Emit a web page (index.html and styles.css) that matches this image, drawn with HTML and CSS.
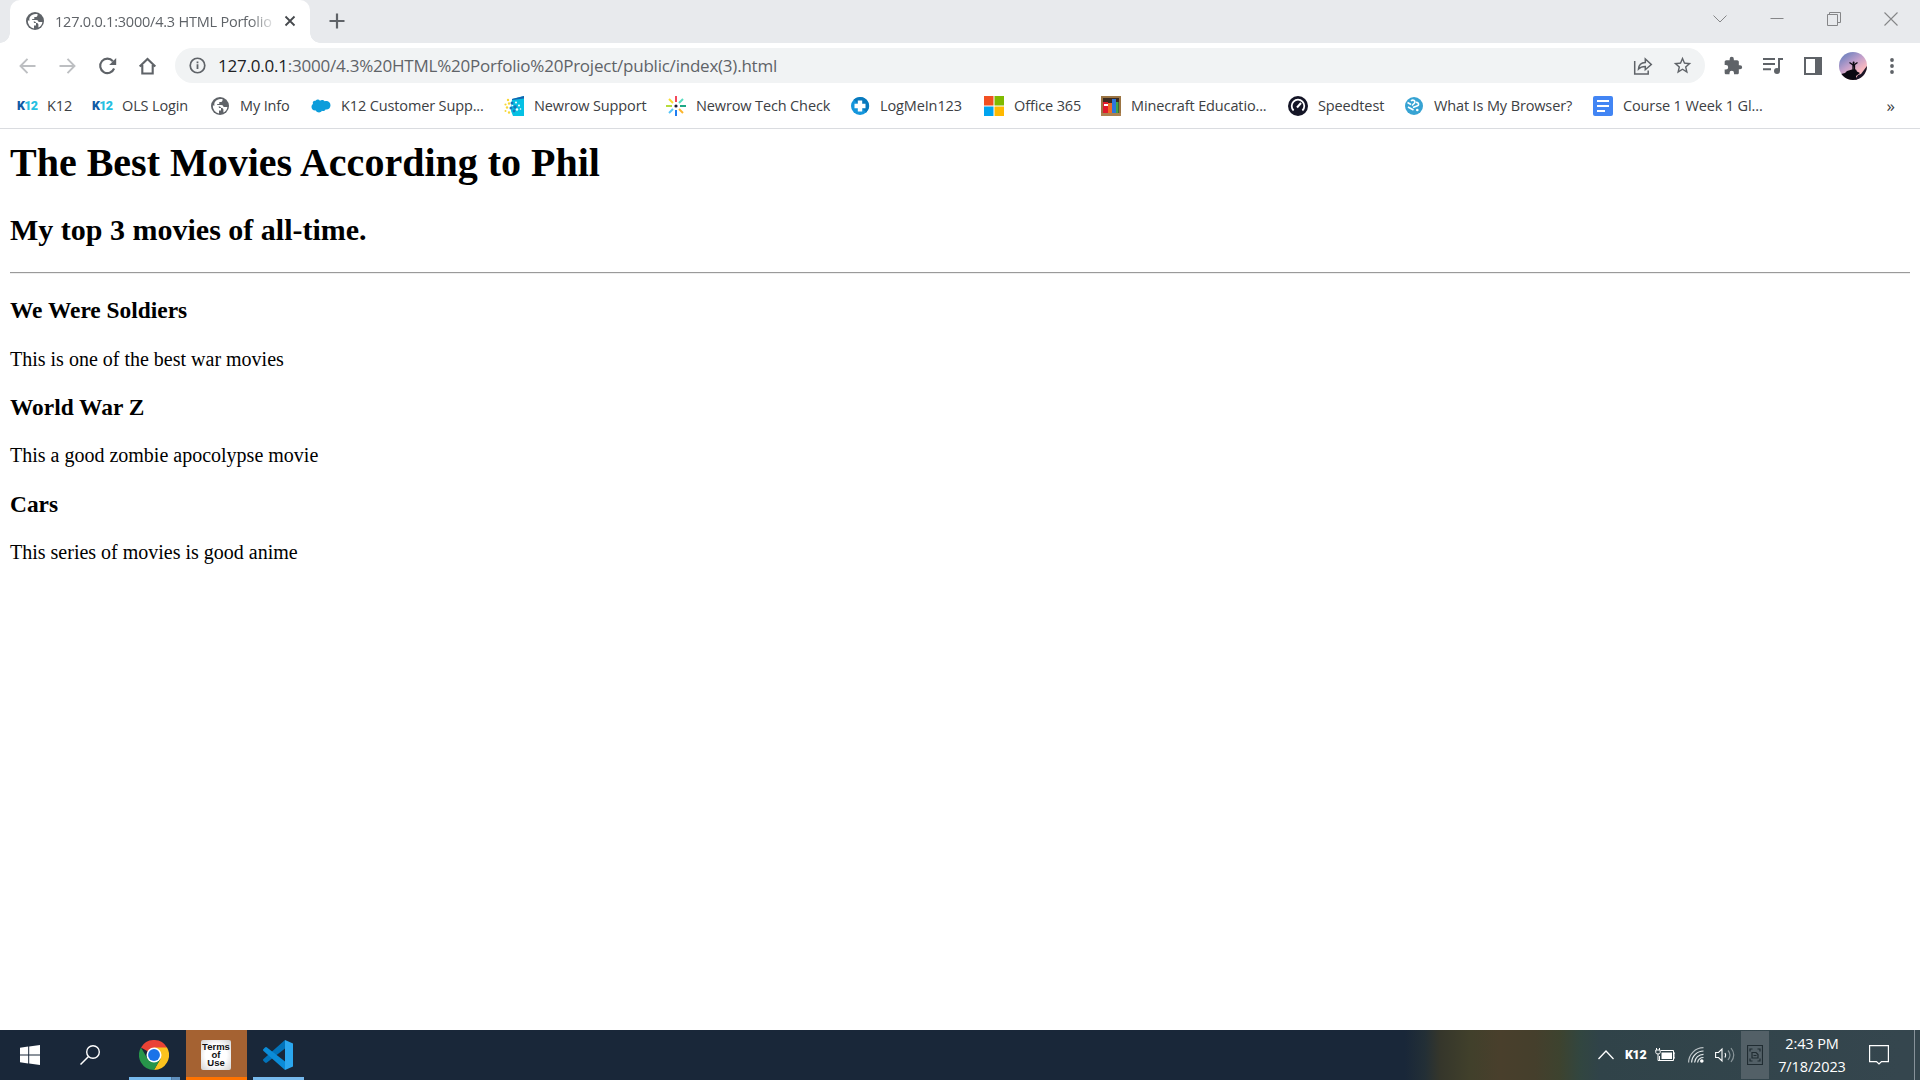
FILE: index.html
```html
<html lang="en">
<head>
<meta charset="utf-8">
<title>127.0.0.1:3000/4.3 HTML Porfolio Project</title>
<link rel="stylesheet" href="styles.css">
</head>
<body>
<svg width="0" height="0" class="defs">
  <symbol id="globe" viewBox="0 0 20 20"><circle cx="10" cy="10" r="9" fill="#5f6368"/><path d="M2.800 9.600H6.500c1.700 0 2.500 1 2.500 2.500H11v2.500H9v2.800A7.400 7.400 0 0 1 2.800 9.600zM7 4c1.600-1 3.800-1.300 5.500-.9v1.200c0 1.200-.8 1.800-1.900 1.800H9.300v2H7.200V9h4c1.500 0 2.300.9 2.300 2h3.900c-.3 2.700-2 4.700-4 5.600v-2.900c0-1.200-.9-1.700-2-1.700-.7-1-1-1.600-2.200-1.600H5.600C4.500 9.800 4.300 8.800 4.300 8c0-1.500 1.200-3.100 2.700-4z" fill="#fff"/></symbol>
</svg>
<div class="tabstrip">
  <div class="tab">
    <svg class="i20" viewBox="0 0 20 20"><use href="#globe"/></svg>
    <span class="tab-title">127.0.0.1:3000/4.3 HTML Porfolio</span>
    <svg class="tab-x" viewBox="0 0 12 12"><path d="M1.500 1.500l9 9M10.500 1.500l-9 9" stroke="#46494d" stroke-width="1.800"/></svg>
  </div>
  <svg class="plus" viewBox="0 0 16 16"><path d="M8 .5v15M.5 8h15" stroke="#5f6368" stroke-width="2.200"/></svg>
  <div class="winctl">
    <svg viewBox="0 0 14 14"><path d="M.5 3.500 7 10l6.500-6.500" fill="none" stroke="#858688"/></svg>
    <svg viewBox="0 0 14 14"><path d="M.5 6.500h13" stroke="#858688"/></svg>
    <svg viewBox="0 0 14 14"><path d="M.5 2.500h10v11H.5zM2.500 2.500v-2h11v10h-2.500" fill="none" stroke="#858688"/></svg>
    <svg viewBox="0 0 14 14"><path d="M.5.500l13 13M13.500.500l-13 13" stroke="#858688" stroke-width="1.100"/></svg>
  </div>
</div>
<div class="toolbar">
  <div class="nav">
    <svg viewBox="0 0 20 20"><path d="M18.500 10H3.500M10.500 2.800 3.500 10l7 7.200" fill="none" stroke="#bdbfc2" stroke-width="1.900"/></svg>
    <svg viewBox="0 0 20 20"><path d="M2.500 10H17.500M10.500 2.800 17.500 10l-7 7.200" fill="none" stroke="#bdbfc2" stroke-width="1.900"/></svg>
    <svg viewBox="0 0 20 20"><path d="M17.100 12.500A7.200 7.200 0 1 1 15.900 5.200" fill="none" stroke="#5f6368" stroke-width="2.100"/><path d="M19.200 2v7h-7z" fill="#5f6368"/></svg>
    <svg viewBox="0 0 20 20"><path d="M2.700 10.600 10.500 3l7.800 7.600M5.300 9v8.500h10.400V9" fill="none" stroke="#5f6368" stroke-width="2.100"/></svg>
  </div>
  <div class="omnibox">
    <svg class="info" viewBox="0 0 18 18"><circle cx="9" cy="9" r="7.700" fill="none" stroke="#5f6368" stroke-width="1.800"/><path d="M9 7.800v5M9 4.800v1.900" stroke="#5f6368" stroke-width="1.900"/></svg>
    <span class="url"><b>127.0.0.1</b>:3000/4.3%20HTML%20Porfolio%20Project/public/index(3).html</span>
    <svg class="share" viewBox="0 0 20 20"><path d="M1.700 5v13h13.500v-3.500" fill="none" stroke="#5f6368" stroke-width="1.500"/><path d="M5.500 13c.3-4.500 3-6.500 6.800-6.600V3l6 5.500-6 5.200v-3.300c-3 0-5 .6-6.800 2.600z" fill="none" stroke="#5f6368" stroke-width="1.500"/></svg>
    <svg class="star" viewBox="0 0 24 24"><path d="M22 9.240l-7.190-.62L12 2 9.190 8.630 2 9.240l5.460 4.730L5.820 21 12 17.270 18.180 21l-1.630-7.030L22 9.240zM12 15.400l-3.760 2.270 1-4.280-3.320-2.880 4.380-.38L12 6.100l1.710 4.040 4.380.38-3.320 2.880 1 4.280L12 15.400z" fill="#5f6368"/></svg>
  </div>
  <div class="actions">
    <svg viewBox="0 0 24 24"><path d="M20.500 11H19V7c0-1.100-.9-2-2-2h-4V3.500a2.500 2.500 0 0 0-5 0V5H4c-1.100 0-2 .9-2 2v3.800h1.500a2.700 2.700 0 0 1 0 5.400H2V20c0 1.100.9 2 2 2h3.800v-1.500a2.700 2.700 0 0 1 5.400 0V22H17c1.100 0 2-.9 2-2v-4h1.500a2.500 2.500 0 0 0 0-5z" fill="#5f6368"/></svg>
    <svg viewBox="0 0 20 20"><path d="M0 3h12M0 8h12M0 13.300h8M16 15V2.900h4" fill="none" stroke="#5f6368" stroke-width="2"/><circle cx="14" cy="15" r="3" fill="#5f6368"/></svg>
    <svg viewBox="0 0 20 20"><path d="M2 2h16v16H2z" fill="none" stroke="#5f6368" stroke-width="2"/><path d="M12 2h6v16h-6z" fill="#5f6368"/></svg>
    <svg class="avatar" viewBox="0 0 28 28"><defs><linearGradient id="sky" x2=".7" y2="1"><stop offset="0" stop-color="#5478bb"/><stop offset=".5" stop-color="#c3a0cb"/><stop offset=".8" stop-color="#f8b9c0"/></linearGradient><clipPath id="round"><circle cx="14" cy="14" r="14"/></clipPath></defs><g clip-path="url(#round)"><path d="M0 0h28v28H0z" fill="url(#sky)"/><path d="M0 22.500l6-1.500 2-2 5-1.500h4l1 2 3 1.500-4 3 1 4H0z" fill="#0b0910"/><path d="M16 28l3-5 3-1 6-8v14z" fill="#1b1626"/><path d="M10.500 10.500l3 2h2l3-2M14.500 11v3.500M14 13v5M15.500 13v5" stroke="#0b0910" stroke-width="1.300" fill="none"/><circle cx="14.600" cy="10.500" r="1" fill="#0b0910"/></g></svg>
    <svg class="dots" viewBox="0 0 20 20"><g fill="#5f6368"><circle cx="10" cy="4" r="1.900"/><circle cx="10" cy="10" r="1.900"/><circle cx="10" cy="16" r="1.900"/></g></svg>
  </div>
</div>
<div class="bookmarks">
  <div class="bm"><span class="k12"><b>K</b>12</span><span class="t">K12</span></div>
  <div class="bm"><span class="k12"><b>K</b>12</span><span class="t">OLS Login</span></div>
  <div class="bm"><svg class="i20" viewBox="0 0 20 20"><use href="#globe"/></svg><span class="t">My Info</span></div>
  <div class="bm"><svg class="i20" viewBox="0 0 20 20"><path d="M4.500 4.700C6 3 8 3.300 9 4.700c1-1 3.500-1.200 4.700.6 2.800-1.200 5.800.7 5.800 3.900 0 3-2.500 4.800-5 4.300-.8 1.500-2.400 1.800-3.600 1.200-1 2.300-5 2.300-6-.3C2.300 14.800.5 13 .5 11c0-1.200.5-2.300 1.500-3-.8-2 .5-3.700 2.500-3.300z" fill="#0d9ddb"/></svg><span class="t">K12 Customer Supp...</span></div>
  <div class="bm"><svg class="i20" viewBox="0 0 20 20"><path d="M8 3l12-3v20H9l-2-5z" fill="#06c1e4"/><path d="M8 3l12-3v2.500L8 4z" fill="#1561ae"/><g fill="#f7d735"><circle cx="4" cy="4" r="1.200"/><circle cx="1.500" cy="8.500" r="1.100"/><circle cx="5" cy="7.500" r="1.200"/><circle cx="3" cy="11.500" r="1.200"/><circle cx="1.500" cy="15" r="1"/><circle cx="5" cy="16.500" r="1.200"/></g><g fill="#1976bc"><circle cx="8" cy="7" r="1.500"/><circle cx="7" cy="12" r="1.500"/><circle cx="11" cy="11" r="1.800"/><circle cx="10" cy="15" r="1.400"/></g><g fill="#fff"><circle cx="12" cy="6.500" r="1"/><circle cx="15" cy="9.500" r="1"/><circle cx="13" cy="13.500" r="1.200"/><circle cx="8.500" cy="9.500" r=".8"/><circle cx="16.500" cy="13" r=".8"/></g></svg><span class="t">Newrow Support</span></div>
  <div class="bm"><svg class="i20" viewBox="0 0 20 20"><g stroke-width="2"><path d="M10 0v6" stroke="#f2485a"/><path d="M17 3l-4 4" stroke="#57dcc0"/><path d="M20 10h-6" stroke="#1da886"/><path d="M17 17l-4-4" stroke="#fcb52b"/><path d="M10 20v-6" stroke="#207df1"/><path d="M3 17l4-4" stroke="#55c5f8"/><path d="M0 10h6" stroke="#b6dc3c"/><path d="M3 3l4 4" stroke="#f9db30"/></g><circle cx="10" cy="10" r="1.600" fill="#1d1b33"/></svg><span class="t">Newrow Tech Check</span></div>
  <div class="bm"><svg class="i20" viewBox="0 0 20 20"><circle cx="10" cy="10" r="9" fill="#1596dc"/><path d="M10 1a9 9 0 0 1 6.400 15.400L3.600 3.600A9 9 0 0 1 10 1z" fill="#0879bd"/><path d="M7.800 4.500h4.400v3.300h3.300v4.400h-3.300v3.300H7.800v-3.300H4.500V7.800h3.300z" fill="#fff"/></svg><span class="t">LogMeIn123</span></div>
  <div class="bm"><svg class="i20" viewBox="0 0 20 20"><path d="M0 0h9.500v9.500H0z" fill="#f25022"/><path d="M10.500 0H20v9.500h-9.500z" fill="#7fba00"/><path d="M0 10.500h9.500V20H0z" fill="#00a4ef"/><path d="M10.500 10.500H20V20h-9.500z" fill="#ffb900"/></svg><span class="t">Office 365</span></div>
  <div class="bm"><svg class="i20" viewBox="0 0 20 20"><path d="M0 0h20v20H0z" fill="#9b7443"/><path d="M2 2h16v15H2z" fill="#3b2b20"/><path d="M2 6h5v11H2z" fill="#df1b2c"/><path d="M3 8h4v2H3z" fill="#fff"/><path d="M7 7h4v10H7z" fill="#f06a25"/><path d="M11 3h4v14h-4z" fill="#2d75dd"/><path d="M15 6h2.500v11H15z" fill="#3fa64a"/><path d="M0 17h20v3H0z" fill="#ad8250"/></svg><span class="t">Minecraft Educatio...</span></div>
  <div class="bm"><svg class="i20" viewBox="0 0 20 20"><circle cx="10" cy="10" r="10" fill="#141526"/><path d="M5.600 14.500a6.300 6.300 0 1 1 8.800 0" fill="none" stroke="#fff" stroke-width="1.800"/><path d="M9 11.500l4-4.500" stroke="#fff" stroke-width="2"/></svg><span class="t">Speedtest</span></div>
  <div class="bm"><svg class="i20" viewBox="0 0 20 20"><circle cx="10" cy="10" r="9" fill="#37a3d3"/><path d="M3.500 6.500 7 8.500M7 5c2-2 5 0 3.500 2L8 9.500M12 6.500c2.500-.5 3.500 2.500 1.500 3.200L9 11.500M4 11l5.500 3" fill="none" stroke="#fff" stroke-width="1.600"/><circle cx="13.300" cy="14" r="1.300" fill="#fff"/></svg><span class="t">What Is My Browser?</span></div>
  <div class="bm"><svg class="i20" viewBox="0 0 20 20"><rect width="20" height="20" rx="2" fill="#4285f4"/><path d="M4 5h12M4 10h12M4 15h8" stroke="#fff" stroke-width="2"/></svg><span class="t">Course 1 Week 1 Gl...</span></div>
  <span class="more">»</span>
</div>
<div class="page">
  <h1>The Best Movies According to Phil</h1>
  <h2>My top 3 movies of all-time.</h2>
  <hr>
  <h3>We Were Soldiers</h3>
  <p>This is one of the best war movies</p>
  <h3>World War Z</h3>
  <p>This a good zombie apocolypse movie</p>
  <h3>Cars</h3>
  <p>This series of movies is good anime</p>
</div>
<div class="taskbar">
  <div class="task start"><svg class="i20" viewBox="0 0 20 20"><path d="M0 2.800 8.200 1.600V9.500H0zM9.200 1.500 20 0v9.500H9.200zM0 10.500h8.200v8L0 17.300zM9.200 10.500H20V20L9.200 18.600z" fill="#fff"/></svg></div>
  <div class="task find"><svg class="i20" viewBox="0 0 20 20"><circle cx="13" cy="7" r="6.300" fill="none" stroke="#fff" stroke-width="1.400"/><path d="M8.500 11.500.5 19.500" stroke="#fff" stroke-width="1.500"/></svg></div>
  <div class="task chrome"><svg viewBox="0 0 48 48"><path d="M24 24 3.200 12A24 24 0 0 1 44.800 12z" fill="#ea4335"/><path d="M24 12h20.800A24 24 0 0 1 24 48l10.400-18z" fill="#fcc31e"/><path d="M3.200 12A24 24 0 0 0 24 48l10.400-18H13.600z" fill="#27954a"/><circle cx="24" cy="24" r="12" fill="#fff"/><circle cx="24" cy="24" r="9.500" fill="#1a73e8"/></svg></div>
  <div class="task terms"><span>Terms<br>of<br>Use</span></div>
  <div class="task code"><svg viewBox="0 0 30 30"><path d="M22 0 30 3.500v23L22 30z" fill="#2ba7ef"/><path d="M22 0v8.500L4 22.500q-1 .8-2 0L.5 21q-1-1 0-2z" fill="#0273ba"/><path d="M22 30v-8.500L4 7.500q-1-.8-2 0L.5 9q-1 1 0 2z" fill="#0b8cd8"/></svg></div>
  <div class="tray">
    <svg class="up" viewBox="0 0 16 20"><path d="M.5 14 8 6l7.500 8" fill="none" stroke="#fff" stroke-width="1.300"/></svg>
    <span class="trayk">K12</span>
    <svg class="i20" viewBox="0 0 20 20"><path d="M6 5.500h12.500v10H4.500V11M18.500 8H20v5h-1.500" fill="none" stroke="#fff"/><path d="M6.500 7.500h10.500v6.500H6.500z" fill="#fff"/><path d="M.8 5h4.400v2.500q0 1.500-2.200 1.500T.8 7.500zM1.500 3v2M4.500 3v2M3 9v6.500h2" fill="none" stroke="#fff"/></svg>
    <svg class="wifi" viewBox="0 0 16 16"><g fill="none" stroke="#e5eaec" stroke-width="1.200"><path d="M.6 15.500A15 15 0 0 1 15.500.7" opacity=".75"/><path d="M3.600 15.500A12 12 0 0 1 15.500 4"/><path d="M6.600 15.500A9 9 0 0 1 15.500 7.300"/><path d="M9.600 15.500a6 6 0 0 1 5.900-5"/></g><circle cx="13.800" cy="14" r="1.800" fill="#fff"/></svg>
    <svg class="i20" viewBox="0 0 20 20"><path d="M.6 7.500h2.900L7 4v12l-3.500-3.500H.6z" fill="none" stroke="#fff" stroke-width="1.100"/><path d="M10 8q1.500 2 0 4.500" fill="none" stroke="#fff" stroke-width="1.200"/><path d="M13 5.500q4 4.500 0 9.500M16 3q5.500 7 0 14" fill="none" stroke="#8b979b" stroke-width="1.200"/></svg>
    <div class="lens"><svg viewBox="0 0 16 20"><path d="M.5.500h15v19H.5zM3 6.500V4h2.500M10.500 4H13v2.500M3 13.500V16h2.500M10.500 16H13v-2.500M5 7.500h4l2 2v3.500H5zM6.500 10.500h3" fill="none" stroke="#202c32" stroke-width="1.200"/></svg></div>
    <div class="clock"><span>2:43 PM</span><span>7/18/2023</span></div>
    <svg class="note" viewBox="0 0 20 20"><path d="M.6.600h18.800v16H12.500L10 19l-2.500-2.400H.6z" fill="none" stroke="#fff" stroke-width="1.200"/></svg>
    <i class="peek"></i>
  </div>
</div>
</body>
</html>
```
FILE: styles.css
```css
* { box-sizing: border-box; }
body { margin: 0; width: 1920px; height: 1080px; overflow: hidden; display: flex; flex-direction: column; background: #fff; font-family: "Open Sans", "Noto Sans", sans-serif; font-size: 14.500px; color: #3c4043; }
svg { display: block; flex: none; }
.defs { position: absolute; }
.i20 { width: 20px; height: 20px; }

.tabstrip { height: 43px; flex: none; background: #e8eaed; display: flex; align-items: stretch; padding-left: 10px; }
.tab { position: relative; width: 300px; background: #fff; border-radius: 10px 10px 0 0; display: flex; align-items: center; padding: 0 14px 1px 15px; }
.tab::before, .tab::after { content: ""; position: absolute; bottom: 0; width: 10px; height: 10px; }
.tab::before { left: -10px; background: radial-gradient(circle at 0 0, transparent 9.500px, #fff 10px); }
.tab::after { right: -10px; background: radial-gradient(circle at 100% 0, transparent 9.500px, #fff 10px); }
.tab-title { margin-left: 10px; width: 218px; overflow: hidden; white-space: nowrap; color: #5f6368; -webkit-mask-image: linear-gradient(90deg, #000 195px, transparent 222px); letter-spacing: -.22px; }
.tab-x { width: 12px; height: 12px; margin-left: 11px; }
.plus { width: 16px; height: 16px; margin: 13px 0 0 19px; }
.winctl { margin-left: auto; display: flex; gap: 43px; padding: 12px 22px 0 0; }
.winctl svg { width: 14px; height: 14px; }

.toolbar { height: 45px; flex: none; display: flex; align-items: center; }
.nav { display: flex; gap: 20px; padding-left: 17px; width: 175px; }
.nav svg { width: 20px; height: 20px; }
.omnibox { width: 1530px; height: 35px; border-radius: 18px; background: #f1f3f4; display: flex; align-items: center; padding: 0 12px 0 14px; }
.info { width: 17px; height: 17px; }
.url { margin-left: 12px; font-size: 17px; letter-spacing: -.225px; color: #5f6368; white-space: nowrap; }
.url b { font-weight: 400; color: #202124; }
.share { width: 20px; height: 20px; margin-left: auto; }
.star { width: 21px; height: 21px; margin-left: 19px; }
.actions { display: flex; align-items: center; padding-left: 18px; }
.actions svg { width: 20px; height: 20px; margin-right: 20px; }
.actions .avatar { width: 28px; height: 28px; margin: 0 15px 0 -4px; }
.actions .dots { margin: 0; }

.bookmarks { height: 41px; flex: none; border-bottom: 1px solid #dadce0; display: flex; align-items: center; gap: 20px; padding: 0 25px 5px 17px; }
.bm { display: flex; align-items: center; gap: 10px; white-space: nowrap; }
.t { letter-spacing: -.13px; }
.bm:nth-child(1) { width: 55px; }
.bm:nth-child(2) { width: 98px; }
.bm:nth-child(3) { width: 81px; }
.bm:nth-child(4) { width: 173px; }
.bm:nth-child(5) { width: 142px; }
.bm:nth-child(6) { width: 164px; }
.bm:nth-child(7) { width: 114px; }
.bm:nth-child(8) { width: 97px; }
.bm:nth-child(9) { width: 167px; }
.bm:nth-child(10) { width: 96px; }
.bm:nth-child(11) { width: 169px; }
.bm:nth-child(12) { width: 171px; }
.k12 { width: 20px; font-family: Roboto, sans-serif; font-weight: 900; font-size: 12.500px; letter-spacing: -.7px; color: #27bfe2; }
.k12 b { color: #115aa5; }
.more { margin-left: auto; font-size: 17px; }

.page { flex: 1; padding: 11px 10px; font-family: "Liberation Serif", "Times New Roman", serif; font-size: 20px; color: #000; }
h1 { font-size: 40px; margin: 0 0 26.800px; line-height: 46px; }
h2 { font-size: 30px; margin: 0; line-height: 34px; }
hr { margin: 25px 0 10px; border: 0; height: 2px; background: linear-gradient(#9a9a9a 50%, #eee 50%); }
h3 { font-size: 23.400px; margin: 23.400px 0; line-height: 27px; }
p { margin: 0; line-height: 23px; }

.taskbar { height: 50px; flex: none; display: flex; background: linear-gradient(90deg, #192739 0, #192739 1405px, #232f36 1425px, #35362b 1440px, #41402b 1470px, #493f2c 1500px, #453f2c 1535px, #3d432f 1560px, #324640 1580px, #304349 1600px, #35464e 1900px); }
.task { display: flex; align-items: center; justify-content: center; }
.task svg:not(.i20) { width: 30px; height: 30px; }
.start { width: 60px; }
.find { width: 60px; }
.chrome, .code { width: 51px; justify-content: flex-start; padding: 3px 0 0 10px; border-bottom: 3px solid #76b9ed; }
.chrome { margin-left: 9px; border-image: linear-gradient(90deg, #76b9ed 40px, #49678a 40px, #5e8ebb 41px) 3; border-width: 0 0 3px; border-style: solid; }
.terms { width: 61px; margin-left: 6px; background: #a56232; border-bottom: 3px solid #ff7300; justify-content: flex-start; padding: 3px 0 0 15px; }
.terms span { width: 30px; height: 30px; border-radius: 2px; background: radial-gradient(#fff 50%, #d2d2d2); color: #111; font: bold 9.500px/8px "Liberation Sans", sans-serif; text-align: center; padding-top: 3px; }
.code { margin-left: 6px; }
.tray { margin-left: auto; display: flex; align-items: center; color: #fff; }
.up { width: 16px; height: 20px; }
.trayk { width: 21px; margin: 0 9px 0 11px; font: 900 12.500px Roboto, sans-serif; letter-spacing: -.4px; padding-bottom: 1px; }
.wifi { width: 16px; height: 16px; margin: 0 11px 0 13px; }
.lens { width: 28px; height: 48px; margin-left: 6px; background: #536067; display: flex; align-items: center; justify-content: center; }
.lens svg { width: 16px; height: 20px; }
.clock { width: 86px; display: flex; flex-direction: column; align-items: center; line-height: 23px; letter-spacing: -.12px; }
.note { width: 20px; height: 20px; margin-left: 14px; }
.peek { align-self: stretch; margin: 0 5px 0 25px; border-left: 1px solid #87929a; }
```
